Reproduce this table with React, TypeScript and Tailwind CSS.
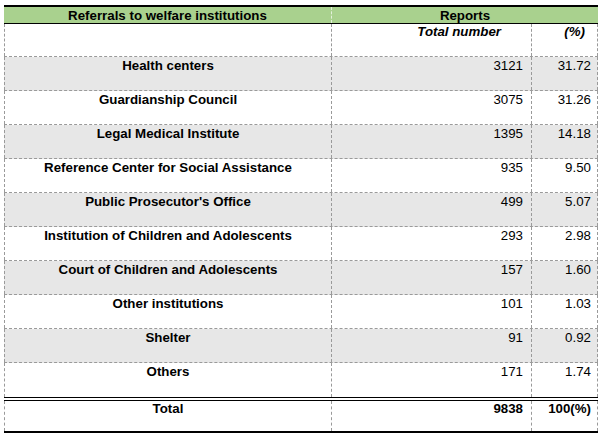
import React from "react";

const rows: [string, string, string][] = [
  ["Health centers", "3121", "31.72"],
  ["Guardianship Council", "3075", "31.26"],
  ["Legal Medical Institute", "1395", "14.18"],
  ["Reference Center for Social Assistance", "935", "9.50"],
  ["Public Prosecutor's Office", "499", "5.07"],
  ["Institution of Children and Adolescents", "293", "2.98"],
  ["Court of Children and Adolescents", "157", "1.60"],
  ["Other institutions", "101", "1.03"],
  ["Shelter", "91", "0.92"],
  ["Others", "171", "1.74"],
];

export default function App() {
  return (
    <div
      className="w-[602px] h-[437px] bg-white pt-[5px] pl-[4px] text-black text-[13.3px] leading-[15px]"
      style={{ fontFamily: '"Liberation Sans", Arial, sans-serif' }}
    >
      <div className="w-[594px]">
        {/* Header */}
        <div className="flex bg-[#a9d18e] border-t-2 border-b border-solid border-black h-[19px]">
          <div className="w-[328px] border-r border-dashed border-[#e4f0dc] flex items-center justify-center font-bold">
            Referrals to welfare institutions
          </div>
          <div className="w-[266px] flex items-center justify-center font-bold">
            Reports
          </div>
        </div>
        {/* Subheader */}
        <div className="flex h-[33px] border-b border-dashed border-[#9a9a9a]">
          <div className="w-[328px] border-l border-r border-dashed border-[#9a9a9a]" />
          <div className="w-[200px] border-r border-dashed border-[#9a9a9a] text-right pr-[30px] font-bold italic">
            Total number
          </div>
          <div className="w-[66px] border-r border-dashed border-[#9a9a9a] text-right pr-[12px] font-bold italic">
            (%)
          </div>
        </div>
        {rows.map(([label, n, p], i) => (
          <div
            key={label}
            className={`flex h-[34px] ${i < rows.length - 1 ? "border-b border-dashed border-[#9a9a9a]" : ""} ${i % 2 === 0 ? "bg-[#e7e7e7]" : "bg-white"}`}
          >
            <div className="w-[328px] border-l border-r border-dashed border-[#9a9a9a] text-center font-bold pt-[1px]">
              {label}
            </div>
            <div className="w-[200px] border-r border-dashed border-[#9a9a9a] text-right pr-[8px] pt-[1px]">
              {n}
            </div>
            <div className="w-[66px] border-r border-dashed border-[#9a9a9a] text-right pr-[6px] pt-[1px]">
              {p}
            </div>
          </div>
        ))}
        {/* Total */}
        <div className="flex h-[36px] border-t-4 border-double border-b-2 border-black">
          <div className="w-[328px] border-l border-r border-dashed border-[#9a9a9a] text-center font-bold">
            Total
          </div>
          <div className="w-[200px] border-r border-dashed border-[#9a9a9a] text-right pr-[8px] font-bold">
            9838
          </div>
          <div className="w-[66px] border-r border-dashed border-[#9a9a9a] text-right pr-[6px] font-bold">
            100(%)
          </div>
        </div>
      </div>
    </div>
  );
}
